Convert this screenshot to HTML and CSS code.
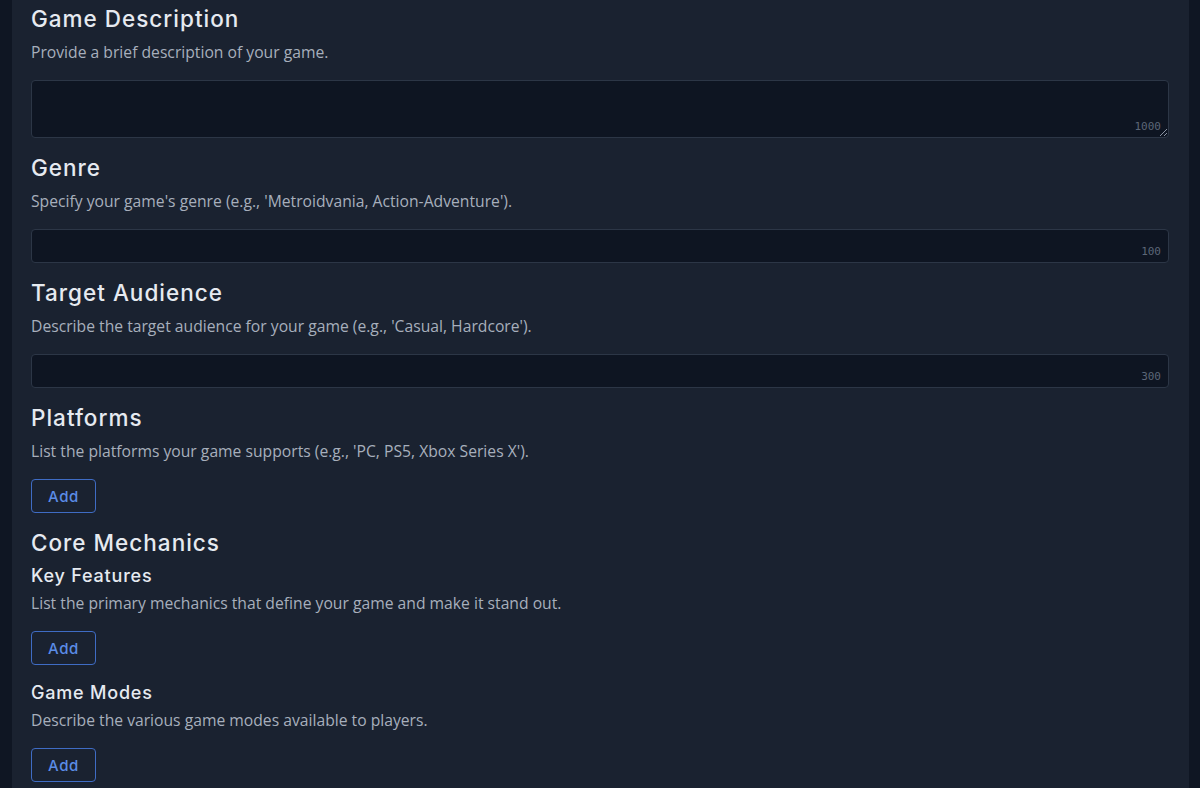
FILE: index.html
```html
<!DOCTYPE html>
<html>
<head>
<meta charset="utf-8">
<link rel="stylesheet" href="styles.css">
</head>
<body>
<div class="panel">
  <section class="field">
    <h2 class="title">Game Description</h2>
    <p class="desc">Provide a brief description of your game.</p>
    <div class="box box-area"><span class="count">1000</span><span class="grip"></span></div>
  </section>
  <section class="field">
    <h2 class="title">Genre</h2>
    <p class="desc">Specify your game's genre (e.g., 'Metroidvania, Action-Adventure').</p>
    <div class="box"><span class="count">100</span></div>
  </section>
  <section class="field">
    <h2 class="title">Target Audience</h2>
    <p class="desc">Describe the target audience for your game (e.g., 'Casual, Hardcore').</p>
    <div class="box"><span class="count">300</span></div>
  </section>
  <section class="field">
    <h2 class="title">Platforms</h2>
    <p class="desc">List the platforms your game supports (e.g., 'PC, PS5, Xbox Series X').</p>
    <button class="add">Add</button>
  </section>
  <section class="field">
    <h2 class="title">Core Mechanics</h2>
    <h3 class="sub">Key Features</h3>
    <p class="desc tight">List the primary mechanics that define your game and make it stand out.</p>
    <button class="add">Add</button>
  </section>
  <section class="field">
    <h3 class="sub">Game Modes</h3>
    <p class="desc tight">Describe the various game modes available to players.</p>
    <button class="add">Add</button>
  </section>
</div>
</body>
</html>
```
FILE: styles.css
```css
html, body {
  margin: 0;
  padding: 0;
  background: #0f1623;
  height: 100%;
  overflow: hidden;
}
.panel {
  margin: 0 11px 0 12px;
  background: #1a2230;
  min-height: 100%;
  padding: 4px 20px 0 19px;
  box-sizing: border-box;
  display: flex;
  flex-direction: column;
  gap: 15px;
}
.field {
  display: flex;
  flex-direction: column;
  align-items: flex-start;
}
.title {
  margin: 0;
  font-family: "Inter", "Noto Sans", sans-serif;
  font-weight: 500;
  font-size: 22.5px;
  line-height: 30px;
  letter-spacing: 1px;
  color: #e6eaf0;
}
.sub {
  margin: 5px 0 0;
  font-family: "Inter", "Noto Sans", sans-serif;
  font-weight: 500;
  font-size: 18px;
  line-height: 26px;
  letter-spacing: 0.8px;
  color: #e6eaf0;
}
.field > .sub:first-child { margin-top: 0; }
.desc {
  margin: 7px 0 17px;
  font-family: "Open Sans", "Noto Sans", sans-serif;
  font-size: 15.7px;
  line-height: 22px;
  color: #a7afbc;
}
.desc.tight { margin-top: 3px; }
.box {
  align-self: stretch;
  height: 34px;
  box-sizing: border-box;
  background: #0e1522;
  border: 1px solid #2c3646;
  border-radius: 4px;
  position: relative;
}
.box-area { height: 58px; }
.count {
  position: absolute;
  right: 7px;
  bottom: 4px;
  font-family: "DejaVu Sans Mono", "Liberation Mono", monospace;
  font-size: 11px;
  line-height: 12px;
  color: #5c6677;
}
.grip {
  position: absolute;
  right: 1px;
  bottom: 1px;
  width: 7px;
  height: 7px;
  background: linear-gradient(135deg, transparent 45%, #8a93a3 45%, #8a93a3 55%, transparent 55%, transparent 75%, #8a93a3 75%, #8a93a3 85%, transparent 85%);
}
.add {
  width: 65px;
  height: 34px;
  box-sizing: border-box;
  background: transparent;
  border: 1px solid #3f6cc4;
  border-radius: 4px;
  color: #5b8ce6;
  font-family: "Inter", "Noto Sans", sans-serif;
  font-weight: 500;
  font-size: 15px;
  letter-spacing: 0.6px;
  padding: 0;
  cursor: pointer;
}
```
